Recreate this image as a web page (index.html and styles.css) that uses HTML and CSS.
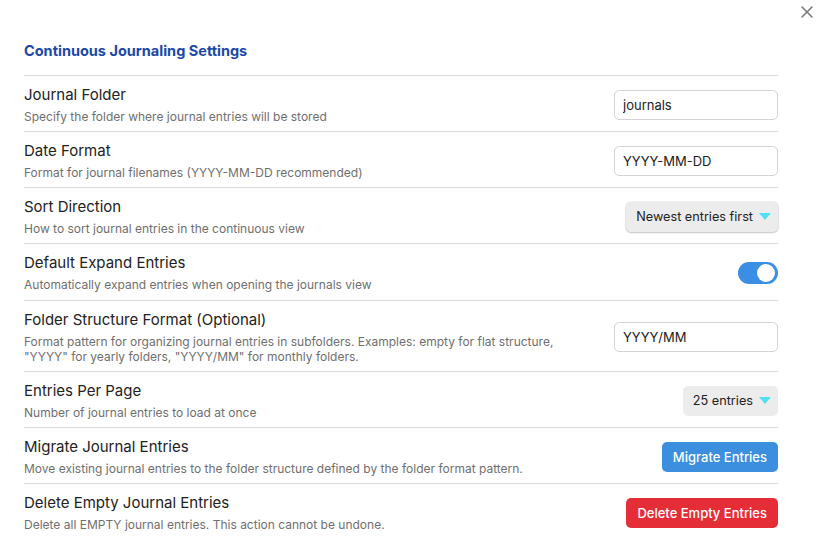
FILE: index.html
```html
<!DOCTYPE html>
<html lang="en">
<head>
<meta charset="utf-8">
<title>Continuous Journaling Settings</title>
<link rel="stylesheet" href="styles.css">
</head>
<body>
<div class="modal">
  <button class="close" aria-label="Close">
    <svg width="12" height="12" viewBox="0 0 12 12"><path d="M1 1L11 11M11 1L1 11" stroke="#7a7a7a" stroke-width="1.6" stroke-linecap="round"/></svg>
  </button>
  <div class="content">
    <h2 class="heading">Continuous Journaling Settings</h2>

    <div class="setting">
      <div class="info">
        <div class="name">Journal Folder</div>
        <div class="desc">Specify the folder where journal entries will be stored</div>
      </div>
      <div class="control"><input class="text-input" type="text" value="journals"></div>
    </div>

    <div class="setting">
      <div class="info">
        <div class="name">Date Format</div>
        <div class="desc">Format for journal filenames (YYYY-MM-DD recommended)</div>
      </div>
      <div class="control"><input class="text-input" type="text" value="YYYY-MM-DD"></div>
    </div>

    <div class="setting">
      <div class="info">
        <div class="name">Sort Direction</div>
        <div class="desc">How to sort journal entries in the continuous view</div>
      </div>
      <div class="control"><div class="dropdown raised"><span>Newest entries first</span><span class="arrow"></span></div></div>
    </div>

    <div class="setting setting-toggle">
      <div class="info">
        <div class="name">Default Expand Entries</div>
        <div class="desc">Automatically expand entries when opening the journals view</div>
      </div>
      <div class="control"><div class="toggle"><div class="knob"></div></div></div>
    </div>

    <div class="setting">
      <div class="info">
        <div class="name">Folder Structure Format (Optional)</div>
        <div class="desc wrap">Format pattern for organizing journal entries in subfolders. Examples: empty for flat structure, "YYYY" for yearly folders, "YYYY/MM" for monthly folders.</div>
      </div>
      <div class="control"><input class="text-input" type="text" value="YYYY/MM"></div>
    </div>

    <div class="setting">
      <div class="info">
        <div class="name">Entries Per Page</div>
        <div class="desc">Number of journal entries to load at once</div>
      </div>
      <div class="control"><div class="dropdown"><span>25 entries</span><span class="arrow"></span></div></div>
    </div>

    <div class="setting">
      <div class="info">
        <div class="name">Migrate Journal Entries</div>
        <div class="desc">Move existing journal entries to the folder structure defined by the folder format pattern.</div>
      </div>
      <div class="control"><button class="btn btn-blue">Migrate Entries</button></div>
    </div>

    <div class="setting">
      <div class="info">
        <div class="name">Delete Empty Journal Entries</div>
        <div class="desc">Delete all EMPTY journal entries. This action cannot be undone.</div>
      </div>
      <div class="control"><button class="btn btn-red">Delete Empty Entries</button></div>
    </div>
  </div>
</div>
</body>
</html>
```

FILE: styles.css
```css
html, body {
  margin: 0;
  padding: 0;
  background: #ffffff;
}
body {
  font-family: Inter, "Liberation Sans", Arial, sans-serif;
  color: #222222;
}
.modal {
  position: relative;
  width: 820px;
  height: 554px;
  background: #ffffff;
}
.close {
  position: absolute;
  top: 6px;
  right: 7px;
  width: 12px;
  height: 12px;
  padding: 0;
  border: 0;
  background: transparent;
  display: flex;
}
.content {
  padding: 39px 42px 0 24px;
}
.heading {
  margin: 0 0 12px 0;
  font-size: 14.5px;
  line-height: 24px;
  font-weight: 700;
  color: #1b48a6;
}
.setting {
  display: flex;
  align-items: center;
  justify-content: space-between;
  gap: 24px;
  border-top: 1px solid #dadada;
  padding: 9px 0 7px 0;
}
.setting-toggle {
  padding-bottom: 8px;
}
.info {
  flex: 1 1 auto;
  min-width: 0;
}
.name {
  font-size: 15px;
  line-height: 20px;
  color: #222222;
}
.desc {
  margin-top: 4px;
  font-size: 12px;
  line-height: 15px;
  color: #6f6f6f;
}
.desc.wrap {
  max-width: 535px;
}
.control {
  flex: 0 0 auto;
  display: flex;
  justify-content: flex-end;
}
.text-input {
  box-sizing: border-box;
  width: 164px;
  height: 30px;
  border: 1px solid #d4d4d4;
  border-radius: 5px;
  padding: 0 8px;
  font-family: inherit;
  font-size: 13px;
  color: #222222;
  background: #ffffff;
  outline: none;
}
.dropdown {
  box-sizing: border-box;
  height: 30px;
  display: flex;
  align-items: center;
  gap: 6px;
  padding: 0 7px 0 10px;
  border-radius: 5px;
  background: #ececec;
  font-size: 12.7px;
  color: #222222;
}
.dropdown.raised {
  box-shadow: 0 0 0 1px rgba(0, 0, 0, 0.06), 0 1px 2px rgba(0, 0, 0, 0.18);
}
.arrow {
  width: 0;
  height: 0;
  border-left: 6px solid transparent;
  border-right: 6px solid transparent;
  border-top: 7px solid #4fe0f6;
}
.toggle {
  box-sizing: border-box;
  width: 40px;
  height: 22px;
  border-radius: 11px;
  background: #3a8ee3;
  display: flex;
  align-items: center;
  justify-content: flex-end;
  padding: 0 3px;
}
.knob {
  width: 18px;
  height: 18px;
  border-radius: 50%;
  background: #ffffff;
}
.btn {
  height: 30px;
  border: 0;
  border-radius: 5px;
  padding: 0 11px;
  font-family: inherit;
  font-size: 13px;
  font-weight: 500;
  color: #ffffff;
}
.btn-blue {
  background: #3b8fde;
}
.btn-red {
  background: #e42d37;
}
```
